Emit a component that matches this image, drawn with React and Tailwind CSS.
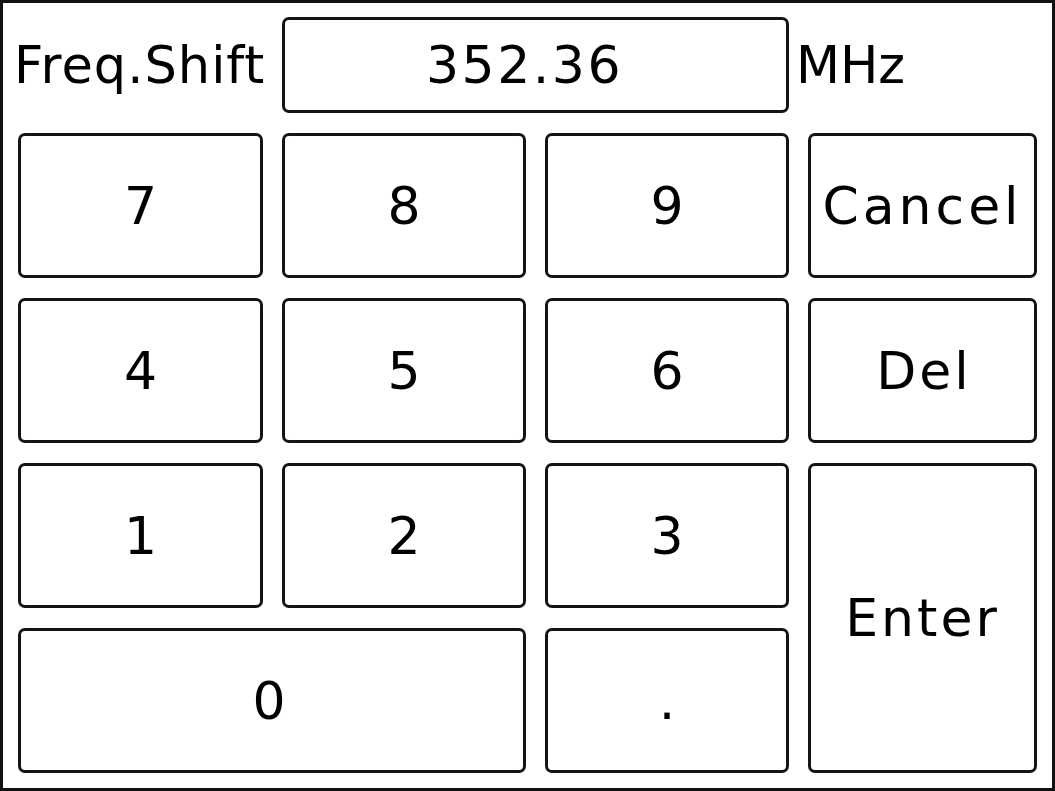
const keys = [
  { label: '7', cls: '' },
  { label: '8', cls: '' },
  { label: '9', cls: '' },
  { label: 'Cancel', cls: 'tracking-[4px]' },
  { label: '4', cls: '' },
  { label: '5', cls: '' },
  { label: '6', cls: '' },
  { label: 'Del', cls: 'tracking-[3px] pl-[3px]' },
  { label: '1', cls: '' },
  { label: '2', cls: '' },
  { label: '3', cls: '' },
  { label: 'Enter', cls: 'row-span-2 tracking-[3px]' },
  { label: '0', cls: 'col-span-2 pr-[6px]' },
  { label: '.', cls: '' },
];

const Key = ({ label, cls }) => (
  <button
    className={`${cls} flex items-center justify-center bg-white border-[3px] border-[#141414] rounded-[7px] text-black text-[52px] leading-none`}
  >
    {label}
  </button>
);

export default function App() {
  return (
    <div
      className="w-[1055px] h-[791px] bg-white border-[3px] border-[#111] px-[15px] pt-[14px] text-black"
      style={{ fontFamily: '"DejaVu Sans", sans-serif' }}
    >
      {/* header */}
      <div className="grid grid-cols-[245px_244px_244px_229px] gap-x-[19px] h-[96px] items-center">
        <span className="-ml-[4px] text-[51px] leading-none tracking-[1px] whitespace-nowrap">Freq.Shift</span>
        <div className="col-span-2 h-[96px] flex items-center justify-center border-[3px] border-[#141414] rounded-[7px] text-[52px] leading-none tracking-[2.5px] pr-[22px]">
          352.36
        </div>
        <span className="-ml-[12px] text-[51px] leading-none">MHz</span>
      </div>

      {/* keypad */}
      <div className="mt-[20px] grid grid-cols-[245px_244px_244px_229px] grid-rows-[145px_145px_145px_145px] gap-x-[19px] gap-y-[20px]">
        {keys.map((k) => (
          <Key key={k.label} {...k} />
        ))}
      </div>
    </div>
  );
}
